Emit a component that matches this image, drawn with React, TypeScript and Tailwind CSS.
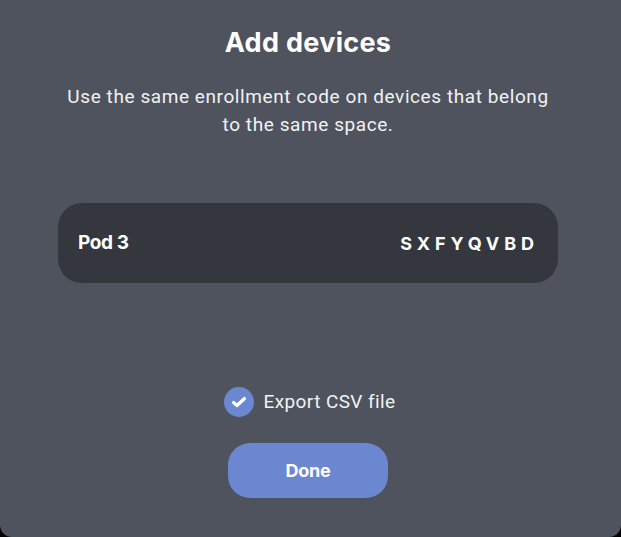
import React from "react";

export default function App() {
  const inter = { fontFamily: "Inter, 'Noto Sans', sans-serif" };
  return (
    <div className="w-[621px] h-[537px] bg-black overflow-hidden" style={{ fontFamily: "Roboto, 'Noto Sans', sans-serif" }}>
      <div className="w-[621px] h-[537px] bg-[#4f535e] rounded-b-[12px] flex flex-col items-center text-white pr-[5px]">
        <h1 style={inter} className="mt-[26px] text-[27px] leading-[34px] font-bold tracking-[0.3px]">Add devices</h1>
        <p className="mt-[23px] w-[496px] text-center text-[19px] leading-[28px] text-[#f1f2f4] tracking-[0.58px]">
          Use the same enrollment code on devices that belong to the same space.
        </p>
        <div className="mt-[64px] w-[500px] h-[80px] rounded-[24px] bg-[#35373f] flex items-center justify-between pl-[20px] pr-[24px]">
          <span style={inter} className="text-[19px] font-bold tracking-[-0.4px]">Pod 3</span>
          <span style={inter} className="text-[18px] font-bold tracking-[4.9px] mr-[-4.9px]">SXFYQVBD</span>
        </div>
        <div className="mt-[104px] flex items-center gap-[10px] ml-[3px]">
          <div className="w-[30px] h-[30px] rounded-full bg-[#6b87cf] flex items-center justify-center">
            <svg width="16" height="14" viewBox="0 0 16 14" fill="none">
              <path d="M2.5 7.5L6 10.5L13.5 3.5" stroke="white" strokeWidth="3.2" strokeLinecap="round" strokeLinejoin="round" />
            </svg>
          </div>
          <span className="text-[19px] text-[#f1f2f4] tracking-[0.4px]">Export CSV file</span>
        </div>
        <button style={inter} className="mt-[26px] w-[160px] h-[55px] rounded-[22px] bg-[#6b87cf] text-white text-[18px] font-bold tracking-[-0.3px]">
          Done
        </button>
      </div>
    </div>
  );
}
